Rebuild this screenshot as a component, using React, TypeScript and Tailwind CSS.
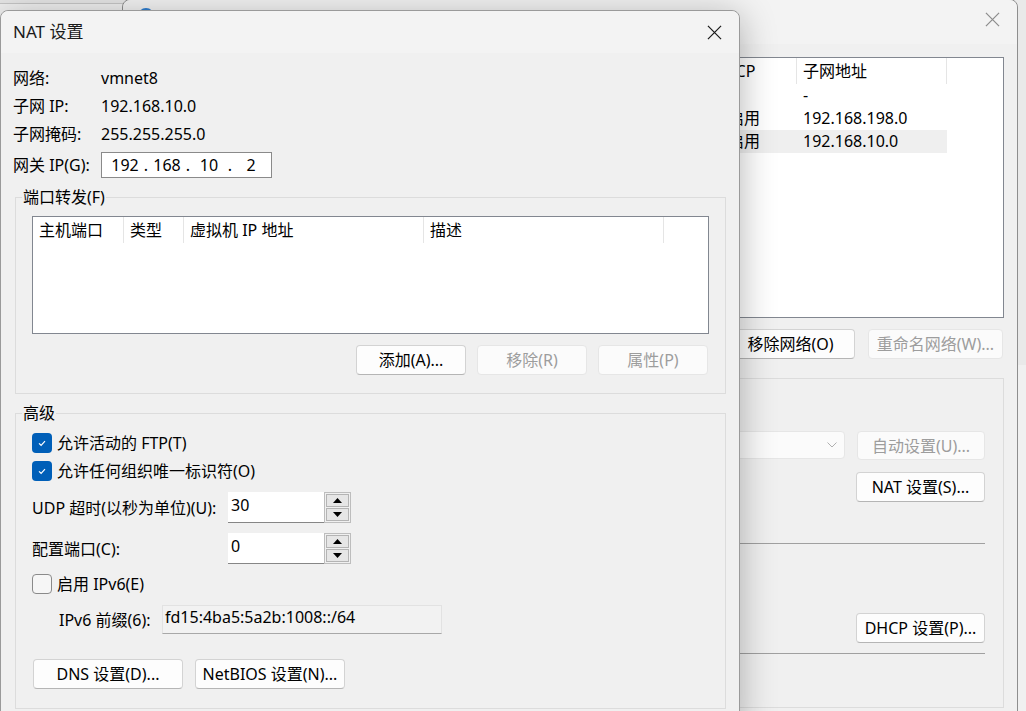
import React from 'react';

type BtnProps = { children?: React.ReactNode; disabled?: boolean; className?: string };

const Button: React.FC<BtnProps> = ({ children, disabled, className = '' }) => (
  <div
    className={`flex items-center justify-center rounded-[4px] border leading-none whitespace-nowrap ${
      disabled
        ? 'bg-[#fbfbfb] border-[#e6e6e6] text-[#9d9d9d]'
        : 'bg-[#fdfdfd] border-[#d3d3d3] border-b-[#b5b5b5] text-black'
    } ${className}`}
  >
    {children}
  </div>
);

const CloseIcon: React.FC<{ color: string; className?: string }> = ({ color, className = '' }) => (
  <svg width="16" height="16" viewBox="0 0 16 16" className={className}>
    <path d="M1 1 L15 15 M15 1 L1 15" stroke={color} strokeWidth="1.3" fill="none" />
  </svg>
);

const Checkbox: React.FC<{ checked?: boolean }> = ({ checked }) =>
  checked ? (
    <div className="w-[20px] h-[20px] rounded-[4px] bg-[#005fb8] flex items-center justify-center">
      <svg width="10" height="10" viewBox="0 0 10 10">
        <path d="M2 5.4 L4.1 7.3 L8 3.2" stroke="white" strokeWidth="1.2" fill="none" />
      </svg>
    </div>
  ) : (
    <div className="w-[20px] h-[20px] rounded-[4px] border border-[#8a8a8a] bg-[#f6f6f6]" />
  );

const Spin: React.FC<{ value: string }> = ({ value }) => (
  <div className="flex h-[31px]">
    <div className="w-[96px] h-[31px] bg-white border-b border-[#868686] pl-[3px] pt-[1px] leading-[24px]">{value}</div>
    <div className="w-[27px] h-[31px] border border-[#bdbdbd] bg-[#f0f0f0] p-[1px] flex flex-col gap-[1px]">
      <div className="flex-1 flex items-center justify-center bg-[#e6e6e6] border border-[#b4b4b4]">
        <svg width="9" height="5" viewBox="0 0 9 5"><path d="M0 5 L4.5 0 L9 5 Z" fill="black" /></svg>
      </div>
      <div className="flex-1 flex items-center justify-center bg-[#e6e6e6] border border-[#b4b4b4]">
        <svg width="9" height="5" viewBox="0 0 9 5"><path d="M0 0 L9 0 L4.5 5 Z" fill="black" /></svg>
      </div>
    </div>
  </div>
);

// columns of the network list behind the dialog; only the last two show
const netCols = [110, 120, 226, 112, 91, 150];
const netHead = ['', '', '', '', 'DHCP', '子网地址'];
const netRows = [
  ['', '', '', '', '-', '-'],
  ['', '', '', '', '已启用', '192.168.198.0'],
  ['', '', '', '', '已启用', '192.168.10.0'],
];

const BackgroundWindow: React.FC = () => (
  <div className="absolute left-[122px] -top-[1px] w-[896px] h-[720px] rounded-t-[8px] border border-[#8e8e8e] bg-[#f0f0f0] flex flex-col">
    <div className="h-[44px] bg-[#f3f3f3] rounded-t-[8px] flex items-start pl-[15px] pr-[17px]">
      <div className="mt-[8px] w-[16px] h-[16px] rounded-full bg-[#2f7fd2]" />
      <CloseIcon color="#8c8c8c" className="ml-auto mt-[12px] w-[15px] h-[15px]" />
    </div>
    <div className="flex flex-col pl-[14px] pr-[13px]">
      <div className="mt-[13px] h-[261px] border border-[#828790] bg-white flex flex-col">
        <div className="flex h-[26px]">
          {netHead.map((h, i) => (
            <div key={i} style={{ width: netCols[i] }} className="border-r border-[#e5e5e5] pl-[6px] leading-[26px] whitespace-nowrap overflow-hidden">
              {h}
            </div>
          ))}
        </div>
        {netRows.map((r, ri) => (
          <div key={ri} className={`flex h-[23px] w-[809px] ${ri === 2 ? 'bg-[#efefef]' : ''}`}>
            {r.map((c, i) => (
              <div key={i} style={{ width: netCols[i] }} className="pl-[6px] leading-[23px] whitespace-nowrap overflow-hidden">
                {c}
              </div>
            ))}
          </div>
        ))}
      </div>
      <div className="mt-[11px] flex justify-end gap-[13px] pr-[1px]">
        <Button className="w-[129px] h-[30px]" />
        <Button className="w-[129px] h-[30px]">移除网络(O)</Button>
        <Button disabled className="w-[135px] h-[30px]">重命名网络(W)...</Button>
      </div>
      <div className="mt-[19px] h-[330px] border border-[#dcdcdc] flex flex-col items-end pr-[18px] pt-[52px]">
        <div className="flex gap-[12px]">
          <div className="w-[300px] h-[28px] rounded-[4px] border border-[#e6e6e6] bg-[#fbfbfb] flex items-center justify-end pr-[7px]">
            <svg width="10" height="6" viewBox="0 0 10 6"><path d="M0.5 0.5 L5 5 L9.5 0.5" stroke="#b0b0b0" fill="none" /></svg>
          </div>
          <Button disabled className="w-[128px] h-[29px]">自动设置(U)...</Button>
        </div>
        <Button className="mt-[12px] w-[129px] h-[30px]">NAT 设置(S)...</Button>
        <div className="mt-[41px] h-px self-stretch ml-[20px] bg-[#a0a0a0]" />
        <Button className="mt-[69px] w-[129px] h-[30px]">DHCP 设置(P)...</Button>
        <div className="mt-[10px] h-px self-stretch ml-[20px] bg-[#a0a0a0]" />
      </div>
    </div>
  </div>
);

const fwCols = [
  { t: '主机端口', w: 91 },
  { t: '类型', w: 60 },
  { t: '虚拟机 IP 地址', w: 240 },
  { t: '描述', w: 240 },
];

const NatDialog: React.FC = () => (
  <div className="absolute left-0 top-[10px] w-[740px] h-[720px] rounded-t-[8px] border border-[#9a9a9a] bg-[#f0f0f0] shadow-[0_6px_36px_rgba(0,0,0,0.3)] flex flex-col">
    <div className="h-[42px] shrink-0 bg-[#f3f3f3] rounded-t-[8px] flex items-center pl-[12px] pr-[17px]">
      <span className="text-[17px] text-[#1a1a1a]">NAT 设置</span>
      <CloseIcon color="#1a1a1a" className="ml-auto w-[15px] h-[15px]" />
    </div>
    <div className="flex flex-col pl-[12px] pt-[11px]">
      {[
        ['网络:', 'vmnet8'],
        ['子网 IP:', '192.168.10.0'],
        ['子网掩码:', '255.255.255.0'],
      ].map(([l, v]) => (
        <div key={l} className="flex h-[28px] items-center">
          <span className="w-[88px]">{l}</span>
          <span>{v}</span>
        </div>
      ))}
      <div className="mt-[4px] flex h-[26px] items-center">
        <span className="w-[88px]">网关 IP(G):</span>
        <div className="w-[171px] h-[26px] border border-[#8a8a8a] bg-white flex items-center pl-[6px] leading-none">
          <span className="w-[34px] text-center">192</span>
          <span className="w-[8px] text-center">.</span>
          <span className="w-[34px] text-center">168</span>
          <span className="w-[8px] text-center">.</span>
          <span className="w-[34px] text-center">10</span>
          <span className="w-[8px] text-center">.</span>
          <span className="w-[34px] text-center">2</span>
        </div>
      </div>

      <fieldset className="mt-[9px] ml-[2px] w-[711px] border border-[#dcdcdc]">
        <legend className="ml-[6px] px-[1px] leading-[20px]">端口转发(F)</legend>
        <div className="flex flex-col pl-[16px] pr-[16px] pt-[9px] pb-[18px]">
          <div className="h-[118px] border border-[#828790] bg-white">
            <div className="flex h-[26px]">
              {fwCols.map((c) => (
                <div key={c.t} style={{ width: c.w }} className="border-r border-[#e5e5e5] pl-[6px] leading-[26px] whitespace-nowrap">
                  {c.t}
                </div>
              ))}
            </div>
          </div>
          <div className="mt-[11px] flex justify-end gap-[11px] pr-[1px]">
            <Button className="w-[110px] h-[30px]">添加(A)...</Button>
            <Button disabled className="w-[110px] h-[30px]">移除(R)</Button>
            <Button disabled className="w-[110px] h-[30px]">属性(P)</Button>
          </div>
        </div>
      </fieldset>

      <fieldset className="mt-[9px] ml-[2px] w-[711px] border border-[#dcdcdc]">
        <legend className="ml-[6px] px-[1px] leading-[20px]">高级</legend>
        <div className="flex flex-col pl-[16px] pt-[6px] pb-[19px]">
          <div className="flex h-[28px] items-center gap-[5px]">
            <Checkbox checked />
            <span>允许活动的 FTP(T)</span>
          </div>
          <div className="flex h-[28px] items-center gap-[5px]">
            <Checkbox checked />
            <span>允许任何组织唯一标识符(O)</span>
          </div>
          <div className="mt-[7px] flex items-center">
            <span className="w-[196px] whitespace-nowrap">UDP 超时(以秒为单位)(U):</span>
            <Spin value="30" />
          </div>
          <div className="mt-[10px] flex items-center">
            <span className="w-[196px]">配置端口(C):</span>
            <Spin value="0" />
          </div>
          <div className="mt-[6px] flex h-[28px] items-center gap-[5px]">
            <Checkbox />
            <span>启用 IPv6(E)</span>
          </div>
          <div className="mt-[7px] flex items-center pl-[27px]">
            <span className="w-[103px] whitespace-nowrap">IPv6 前缀(6):</span>
            <div className="w-[280px] h-[29px] border border-[#e2e2e2] border-b-[#a8a8a8] bg-[#f2f2f2] pl-[2px] leading-[22px]">
              fd15:4ba5:5a2b:1008::/64
            </div>
          </div>
          <div className="mt-[25px] ml-[1px] flex gap-[12px]">
            <Button className="w-[150px] h-[30px]">DNS 设置(D)...</Button>
            <Button className="w-[150px] h-[30px]">NetBIOS 设置(N)...</Button>
          </div>
        </div>
      </fieldset>
    </div>
  </div>
);

export default function App() {
  return (
    <div className="relative w-[1026px] h-[711px] overflow-hidden bg-[#e6e6e6] text-[16px] text-black font-['Noto_Sans','Noto_Sans_CJK_SC',sans-serif]">
      <div className="absolute left-[960px] top-0 w-[80px] h-[711px] flex flex-col">
        <div className="h-[365px] bg-[#e9e9e9] border-l border-[#d0d0d0]" />
        <div className="flex-1 bg-[#f0f0f0] border-l border-[#d0d0d0]" />
      </div>
      <div className="absolute -left-[10px] top-[3px] w-[160px] h-[720px] bg-[#f0f0f0] border border-[#c6c6c6]" />
      <BackgroundWindow />
      <NatDialog />
    </div>
  );
}
